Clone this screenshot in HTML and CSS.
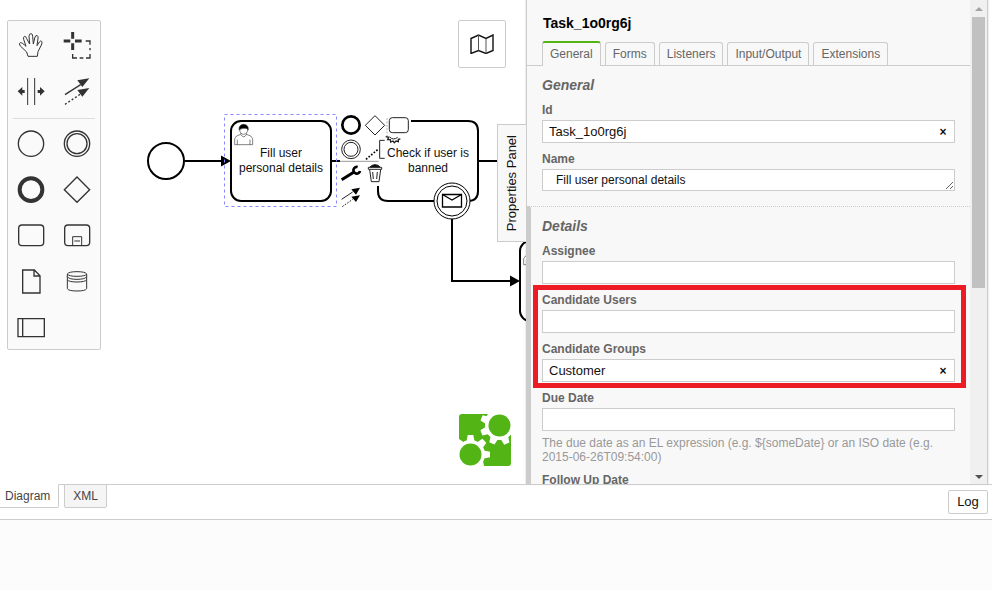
FILE: index.html
```html
<!DOCTYPE html>
<html lang="en">
<head>
<meta charset="utf-8">
<title>Process Modeler</title>
<link rel="stylesheet" href="styles.css">
</head>
<body>
<main class="workspace">
  <section class="canvas" aria-label="Diagram">
    <svg class="diagram">
      <defs>
        <g id="user-mark" fill="#fff" stroke="#444" stroke-width="2">
          <path d="M284 134V116Q286 107 302 103H320Q336 107 338 116V134Z"/>
          <path d="M292 134V119M330 134V119"/>
          <path d="M302 103Q311 118 320 103L317 96H305Z"/>
          <ellipse cx="311" cy="89" rx="12" ry="14"/>
          <path d="M297 90Q296 74 311 73Q326 74 325 90Q321 83 311 85Q302 86 297 90Z" fill="#000"/>
        </g>
      </defs>
      <g fill="none" stroke="#000" stroke-width="2">
        <circle cx="166" cy="161" r="18"/>
        <path d="M185 161H222M332 161H340M478 161H500M452 219V281H511"/>
        <rect x="231" y="121" width="100" height="80" rx="10"/>
        <path d="M411 121H468Q478 121 478 131V191Q478 201 468 201H388Q378 201 378 191V186"/>
        <rect x="520" y="241" width="100" height="80" rx="10"/>
      </g>
      <path d="M221 155.500L231 161L221 166.500ZM510 275.500L520 281L510 286.500Z"/>
      <g fill="#fff" stroke="#000">
        <circle cx="452" cy="201" r="18"/>
        <circle cx="452" cy="201" r="15"/>
        <path d="M442.500 194.500H461.500V207H442.500ZM442.500 194.500L452 200L461.500 194.500" stroke-width="1.300"/>
      </g>
      <use href="#user-mark" transform="translate(140 100) scale(.3333)"/>
      <use href="#user-mark" transform="translate(429 220) scale(.3333)"/>
      <g class="node-label">
        <text x="281" y="157">Fill user</text>
        <text x="281" y="172">personal details</text>
        <text x="428" y="157">Check if user is</text>
        <text x="428" y="172">banned</text>
      </g>
      <rect x="224.500" y="114.500" width="112" height="92" fill="none" stroke="#8888ff" stroke-dasharray="3 3"/>
      <g transform="translate(320 100) scale(.3333)" fill="none" stroke="#222" stroke-width="3">
        <path d="M60 184H176" stroke="#999"/>
        <path d="M201 55V110" stroke="#aaa" stroke-dasharray="5 5"/>
        <circle cx="93" cy="75" r="26" stroke="#000" stroke-width="8"/>
        <path d="M165 47L194 76L165 105L136 76Z"/>
        <rect x="208" y="53" width="57" height="45" rx="9" fill="#fff"/>
        <path d="M197 110L206 112L203 119L211 119L212 126L219 123L223 128L228 123L235 125L235 118L241 117" stroke-width="4"/>
        <path d="M209 111Q220 122 233 112"/>
        <circle cx="93" cy="148" r="28"/>
        <circle cx="93" cy="148" r="21"/>
        <path d="M194 121H179V175H194"/>
        <path d="M138 178L173 149" stroke="#000" stroke-width="5" stroke-dasharray="5 5"/>
        <path d="M65 239L101 217" stroke="#000" stroke-width="9"/>
        <path d="M113 201A10 10 0 1 0 120 213" stroke="#000" stroke-width="8"/>
        <path d="M145 202V208H185V202ZM149 209L154 245H177L182 209M158 216L160 237M172 216L170 237"/>
        <path d="M150 201Q156 194 165 194Q175 194 180 201Z" fill="#000"/>
        <path d="M65 298L98 276"/>
        <path d="M67 320L98 298" stroke-dasharray="5 4"/>
        <path d="M120 263L108 284L94 268ZM120 286L108 306L94 290Z" fill="#000" stroke="none"/>
      </g>
    </svg>

    <div class="palette">
      <button class="tool" aria-label="Hand tool"><svg viewBox="24 33 138 138"><path d="M84 139L80 126L61 108Q55 100 61 98Q66 97 78 109L71 88Q69 80 74 79Q78 79 80 86L89 102L87 79Q87 71 93 71Q98 71 98 79L100 102L105 81Q107 75 112 77Q115 79 114 85L111 107L118 96Q122 91 125 94Q128 97 124 105L114 125L112 139Z" stroke-width="3"/></svg></button>
      <button class="tool" aria-label="Lasso tool"><svg viewBox="162 33 138 138"><path d="M191 93H211M225 93H245M218 66V86M218 100V120" stroke-width="9"/><path d="M257 93H270V104M270 114V121M270 132V144H258M250 144H239M231 144H218V132"/></svg></button>
      <button class="tool" aria-label="Space tool"><svg viewBox="24 171 138 138"><path d="M83 204V285M104 204V285" stroke-width="3"/><path d="M53 244L67 231V240H74V249H67V257ZM134 244L120 231V240H113V249H120V257Z" fill="#333" stroke="none"/></svg></button>
      <button class="tool" aria-label="Connect tool"><svg viewBox="162 171 138 138"><path d="M195 254L242 224"/><path d="M195 283L242 252" stroke-dasharray="6 6"/><path d="M268 205L247 231L232 211ZM268 234L247 260L232 240Z" fill="#333" stroke="none"/></svg></button>
      <hr class="palette-rule">
      <button class="tool" aria-label="Start event"><svg viewBox="24 327 138 138"><circle cx="93" cy="401" r="38"/></svg></button>
      <button class="tool" aria-label="Intermediate event"><svg viewBox="162 327 138 138"><circle cx="231" cy="401" r="38"/><circle cx="231" cy="401" r="30"/></svg></button>
      <button class="tool" aria-label="End event"><svg viewBox="24 -45 138 138"><circle cx="93" cy="29" r="34" stroke-width="12"/></svg></button>
      <button class="tool" aria-label="Gateway"><svg viewBox="162 -45 138 138"><path d="M231 -9L269 29L231 67L193 29Z"/></svg></button>
      <button class="tool" aria-label="Task"><svg viewBox="24 93 138 138"><rect x="56" y="135" width="75" height="62" rx="10"/></svg></button>
      <button class="tool" aria-label="Subprocess"><svg viewBox="162 93 138 138"><rect x="194" y="135" width="75" height="62" rx="10"/><path d="M218 197V170H245V197M223 183H240" stroke-width="3"/></svg></button>
      <button class="tool" aria-label="Data object"><svg viewBox="24 231 138 138"><path d="M68 270H103L120 287V339H68ZM102 270V288H120"/></svg></button>
      <button class="tool" aria-label="Data store"><svg viewBox="162 231 138 138"><path d="M202 282Q206 275 231 275Q256 275 260 282Q256 289 231 289Q206 289 202 282V326Q206 333 231 333Q256 333 260 326V282M202 290Q206 298 231 298Q256 298 260 290M202 299Q206 306 231 306Q256 306 260 299" stroke-width="3"/></svg></button>
      <button class="tool" aria-label="Pool"><svg viewBox="24 369 138 138"><path d="M54 416H133V470H54ZM68 416V470"/></svg></button>
    </div>

    <button class="map-toggle" aria-label="Toggle minimap">
      <svg viewBox="0 0 24 20"><path d="M1 4.500L8.500 1L16 4.500L23 1V16.500L16 19.500L8.500 16.500L1 19.500Z" fill="none" stroke="#111" stroke-width="1.400"/><path d="M8.500 1V16.500M16 4.500V19.500" stroke="#555" stroke-width="1"/></svg>
    </button>

    <svg class="brand" viewBox="0 0 52 52" role="img" aria-label="Camunda">
      <defs>
        <g id="gear" fill="#fff">
          <circle r="14.500"/>
          <path id="tooth" d="M-4 -13L-2.800 -19.500H2.800L4 -13Z"/>
          <use href="#tooth" transform="rotate(45)"/>
          <use href="#tooth" transform="rotate(90)"/>
          <use href="#tooth" transform="rotate(-45)"/>
        </g>
      </defs>
      <rect width="52" height="52" rx="3" fill="#52b415"/>
      <path d="M36 0H52V16H36ZM0 36H16V52H0Z" fill="#fff"/>
      <use href="#gear" transform="translate(11.500 40.500)"/>
      <use href="#gear" transform="translate(40.500 11.500) rotate(-157)"/>
      <path d="M29 0H42V5H26Z" fill="#fff"/>
      <path d="M11 52V47H24L25 52Z" fill="#fff"/>
      <circle cx="11.500" cy="40.500" r="11" fill="#52b415"/>
      <circle cx="40.500" cy="11.500" r="11" fill="#52b415"/>
    </svg>

    <button class="panel-toggle"><span>Properties Panel</span></button>
  </section>

  <aside class="properties">
    <div class="properties-body">
      <h1 class="element-name">Task_1o0rg6j</h1>
      <nav class="tabs">
        <a class="tab tab-active" href="#general">General</a>
        <a class="tab" href="#forms">Forms</a>
        <a class="tab" href="#listeners">Listeners</a>
        <a class="tab" href="#io">Input/Output</a>
        <a class="tab" href="#extensions">Extensions</a>
      </nav>
      <section class="group" id="general">
        <h2>General</h2>
        <div class="field">
          <label for="id">Id</label>
          <div class="control"><input id="id" type="text" value="Task_1o0rg6j"><button class="clear" aria-label="Clear id">×</button></div>
        </div>
        <div class="field">
          <label for="name">Name</label>
          <textarea id="name" rows="1">Fill user personal details</textarea>
        </div>
      </section>
      <section class="group group-marked">
        <h2>Details</h2>
        <div class="field">
          <label for="assignee">Assignee</label>
          <div class="control"><input id="assignee" type="text"></div>
        </div>
        <div class="highlight">
          <div class="field">
            <label for="users">Candidate Users</label>
            <div class="control"><input id="users" type="text"></div>
          </div>
          <div class="field">
            <label for="groups">Candidate Groups</label>
            <div class="control"><input id="groups" type="text" value="Customer"><button class="clear" aria-label="Clear groups">×</button></div>
          </div>
        </div>
        <div class="field">
          <label for="due">Due Date</label>
          <div class="control"><input id="due" type="text"></div>
          <p class="hint">The due date as an EL expression (e.g. ${someDate} or an ISO date (e.g. 2015-06-26T09:54:00)</p>
        </div>
        <div class="field">
          <label for="follow">Follow Up Date</label>
          <div class="control"><input id="follow" type="text"></div>
        </div>
      </section>
    </div>
    <div class="scrollbar" aria-hidden="true">
      <span class="arrow arrow-up"></span>
      <span class="thumb"></span>
      <span class="arrow arrow-down"></span>
    </div>
  </aside>
</main>

<footer>
  <div class="footer-bar">
    <nav class="views">
      <a class="view view-active" href="#diagram">Diagram</a>
      <a class="view" href="#xml">XML</a>
    </nav>
    <button class="log">Log</button>
  </div>
  <div class="log-area"></div>
</footer>
</body>
</html>
```
FILE: styles.css
```css
* { box-sizing: border-box; }

body {
  display: flex;
  flex-direction: column;
  height: 100vh;
  margin: 0;
  overflow: hidden;
  background: #fff;
  color: #111;
  font: 12px/16px "Liberation Sans", Arial, sans-serif;
}

button, input, textarea { margin: 0; font: inherit; color: inherit; }
button { padding: 0; border: 0; background: none; }
a { color: inherit; text-decoration: none; }
svg { display: block; }

.workspace { display: flex; flex: 1; min-height: 0; }

/* Canvas */
.canvas { position: relative; flex: 1; min-width: 0; overflow: hidden; }
.diagram { width: 100%; height: 100%; }
.node-label { fill: #111; font-size: 12px; text-anchor: middle; }

.palette {
  position: absolute;
  top: 20px;
  left: 7px;
  display: grid;
  grid-template-columns: 46px 46px;
  border: 1px solid #ccc;
  border-radius: 2px;
  background: #fafafa;
}
.tool svg {
  width: 46px;
  height: 46px;
  fill: none;
  stroke: #333;
  stroke-width: 4px;
}
.palette-rule {
  grid-column: 1 / -1;
  width: 82px;
  height: 1px;
  margin: 5px 5px 0;
  border: 0;
  background: #ddd;
}

.map-toggle {
  position: absolute;
  top: 20px;
  right: 20px;
  display: grid;
  place-items: center;
  width: 48px;
  height: 48px;
  border: 1px solid #ccc;
  border-radius: 2px;
  background: #fff;
}
.map-toggle svg { width: 24px; height: 20px; }

.brand {
  position: absolute;
  right: 15px;
  bottom: 18px;
  width: 52px;
  height: 52px;
}

.panel-toggle {
  position: absolute;
  top: 124px;
  right: 0;
  width: 29px;
  height: 118px;
  border: 1px solid #ccc;
  border-right: 0;
  background: #f8f8f8;
  font-size: 13px;
}
.panel-toggle span {
  display: block;
  writing-mode: vertical-rl;
  transform: rotate(180deg);
  width: 28px;
  line-height: 28px;
}

/* Properties panel */
.properties {
  display: flex;
  width: 462px;
  margin-right: 4px;
  border: 1px solid #ccc;
  border-width: 0 1px 0 1px;
  background: #f8f8f8;
  box-shadow: 0 0 2px #ccc;
}
.properties-body { flex: 1; min-width: 0; overflow: hidden; }
.element-name { margin: 13px 16px 8px; color: #000; font-size: 14px; line-height: 20px; }

.tabs {
  display: flex;
  gap: 4px;
  padding: 0 15px;
  border-bottom: 1px solid #ccc;
}
.tab {
  height: 23px;
  margin-top: 1px;
  padding: 3px 7px;
  border: 1px solid #ccc;
  border-bottom: 0;
  border-radius: 3px 3px 0 0;
  color: #666;
}
.tab-active {
  height: 25px;
  margin: 0 0 -1px;
  border-top: 2px solid #52b415;
  background: #f8f8f8;
}

.group { padding: 9px 15px 15px; }
.group-marked {
  padding-left: 11px;
  border-top: 1px dotted #ccc;
  border-left: 4px solid #ccc;
}
.group h2 {
  margin: 0 0 7px;
  color: #666;
  font-size: 14px;
  font-style: italic;
  line-height: 20px;
}
.field + .field, .field + .highlight, .highlight + .field { margin-top: 8px; }
.field label {
  display: block;
  margin-bottom: 2px;
  color: #666;
  font-weight: bold;
}
.control {
  display: flex;
  height: 23px;
  border: 1px solid #ccc;
  background: #fff;
}
.control input {
  flex: 1;
  min-width: 0;
  padding: 0 6px;
  border: 0;
  background: none;
  font-size: 13px;
}
.clear { width: 22px; font-size: 12px; font-weight: bold; }
.field textarea {
  display: block;
  width: 100%;
  height: 22px;
  padding: 2px 13px;
  overflow: hidden;
  border: 1px solid #ccc;
  background: #fff;
  resize: vertical;
}
.hint { margin: 5px 0 0; color: #999; line-height: 14px; }

.highlight { position: relative; }
.highlight::after {
  content: "";
  position: absolute;
  inset: -7px -11px -6px -9px;
  border: 5px solid #ed1c24;
  pointer-events: none;
}

.scrollbar {
  display: flex;
  flex-direction: column;
  align-items: center;
  width: 17px;
  padding: 7px 0 5px;
  background: #f0f0f0;
}
.thumb { width: 13px; height: 271px; margin-top: 6px; background: #c1c1c1; }
.arrow { border: 4px solid transparent; border-width: 0 4px; }
.arrow-up { border-bottom: 4px solid #a3a3a3; }
.arrow-down { margin-top: auto; border-top: 4px solid #505050; }

/* Footer */
.footer-bar {
  display: flex;
  justify-content: space-between;
  height: 36px;
  border-top: 1px solid #ccc;
  border-bottom: 1px solid #ccc;
}
.views { display: flex; gap: 5px; margin: -1px 0 0 -4px; }
.view {
  height: 24px;
  padding: 3px 8px;
  border: 1px solid #ccc;
  border-radius: 0 0 2px 2px;
  background: #f5f5f5;
  color: #444;
}
.view-active { border-top-color: #fff; background: #fff; }
.log {
  align-self: flex-start;
  width: 40px;
  height: 24px;
  margin: 5px 4px 0 0;
  border: 1px solid #ccc;
  border-radius: 2px;
  background: #fff;
  font-size: 13px;
}
.log-area { height: 70px; background: #fcfcfc; }
```
